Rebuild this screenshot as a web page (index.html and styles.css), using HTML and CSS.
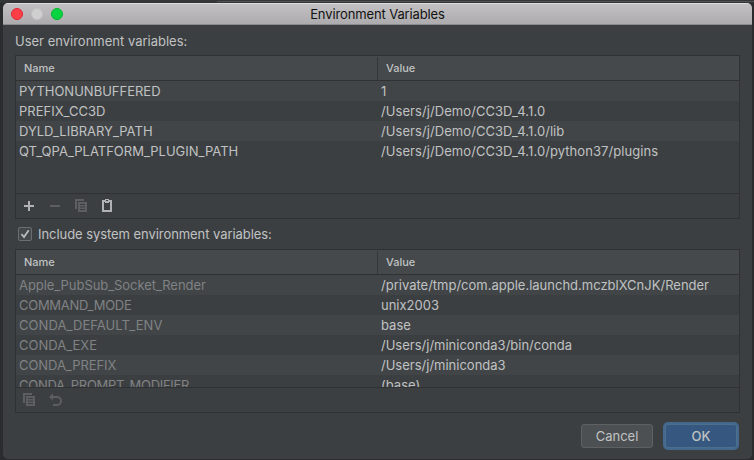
FILE: index.html
```html
<!DOCTYPE html>
<html lang="en">
<head>
<meta charset="utf-8">
<title>Environment Variables</title>
<link rel="stylesheet" href="styles.css">
</head>
<body>
<main class="window">
  <header class="titlebar">
    <div class="lights"><i class="light close"></i><i class="light minimize"></i><i class="light maximize"></i></div>
    <h1 class="title">Environment Variables</h1>
  </header>
  <section class="content">
    <div class="label user-label"><span>User environment variables:</span></div>
    <div class="panel user-panel">
      <div class="row head"><span class="name">Name</span><span class="value">Value</span></div>
      <div class="rows">
        <div class="row"><span class="name">PYTHONUNBUFFERED</span><span class="value">1</span></div>
        <div class="row"><span class="name">PREFIX_CC3D</span><span class="value loose">/Users/j/Demo/CC3D_4.1.0</span></div>
        <div class="row"><span class="name">DYLD_LIBRARY_PATH</span><span class="value loose">/Users/j/Demo/CC3D_4.1.0/lib</span></div>
        <div class="row"><span class="name">QT_QPA_PLATFORM_PLUGIN_PATH</span><span class="value loose">/Users/j/Demo/CC3D_4.1.0/python37/plugins</span></div>
      </div>
      <div class="tools">
        <svg class="icon on" viewBox="0 0 16 16"><path d="M7 3h2v4h4v2H9v4H7V9H3V7h4z"/></svg>
        <svg class="icon" viewBox="0 0 16 16"><path d="M3 7h10v2H3z"/></svg>
        <svg class="icon" viewBox="0 0 16 16"><path d="M2 1h9v2H4v8H2z"/><path fill-rule="evenodd" d="M5 4h9v10H5zM7 6v1h5V6zM7 8.500v1h5v-1zM7 11v1h5v-1z"/></svg>
        <svg class="icon on" viewBox="0 0 16 16"><path fill-rule="evenodd" d="M3 2h3V1h4v1h3v12H3zM5 4v8h6V4H10v1H6V4zM7 2v1h2V2z"/></svg>
      </div>
    </div>
    <label class="label check-label"><svg class="checkbox" viewBox="0 0 14 14"><rect class="box" x=".5" y=".5" width="13" height="13" rx="1.500"/><path class="tick" d="M3.500 7.200 6 10l4.700-6.700"/></svg><span class="snug">Include system environment variables:</span></label>
    <div class="panel system-panel">
      <div class="row head"><span class="name">Name</span><span class="value">Value</span></div>
      <div class="rows">
        <div class="row"><span class="name snug">Apple_PubSub_Socket_Render</span><span class="value">/private/tmp/com.apple.launchd.mczblXCnJK/Render</span></div>
        <div class="row"><span class="name tight">COMMAND_MODE</span><span class="value">unix2003</span></div>
        <div class="row"><span class="name loose">CONDA_DEFAULT_ENV</span><span class="value">base</span></div>
        <div class="row"><span class="name">CONDA_EXE</span><span class="value">/Users/j/miniconda3/bin/conda</span></div>
        <div class="row"><span class="name snug">CONDA_PREFIX</span><span class="value">/Users/j/miniconda3</span></div>
        <div class="row"><span class="name tight">CONDA_PROMPT_MODIFIER</span><span class="value">(base)</span></div>
      </div>
      <div class="tools">
        <svg class="icon" viewBox="0 0 16 16"><path d="M2 1h9v2H4v8H2z"/><path fill-rule="evenodd" d="M5 4h9v10H5zM7 6v1h5V6zM7 8.500v1h5v-1zM7 11v1h5v-1z"/></svg>
        <svg class="icon" viewBox="0 0 16 16"><path d="M2 4.900 6 1.300v7.200z"/><path class="curve" d="M5 5h5a4 4 0 0 1 0 8H6"/></svg>
      </div>
    </div>
    <footer class="buttons"><button class="button">Cancel</button><button class="button primary">OK</button></footer>
  </section>
</main>
</body>
</html>
```

FILE: styles.css
```css
* { box-sizing: border-box; }
body {
  margin: 0;
  width: 754px;
  height: 460px;
  padding: 3px 2px 1px 3px;
  overflow: hidden;
  background:
    linear-gradient(#505253, #505253) 217px 1px / 537px 1px no-repeat,
    linear-gradient(#343738, #343738) 0 0 / 754px 3px no-repeat,
    #2a2c2d;
  font: 13px/20px Inter, "Liberation Sans", sans-serif;
  color: #c0c2c3;
}
.window {
  width: 749px;
  height: 456px;
  border-radius: 5px;
  background: #3c3f41;
  overflow: hidden;
}
.titlebar {
  display: grid;
  grid-template-columns: 100px 1fr 100px;
  align-items: center;
  height: 22px;
  background: linear-gradient(#c2c0c2, #adabad);
  border-top: 1px solid #dcdcdc;
  border-bottom: 1px solid #8b8b8b;
}
.lights { display: flex; gap: 8px; padding-left: 8px; }
.light { width: 12px; height: 12px; border-radius: 50%; border: 1px solid; }
.close { background: #fc3e46; border-color: #df2733; }
.minimize { background: #d0cfd0; border-color: #c3c2c3; }
.maximize { background: #08d442; border-color: #04b52d; }
.title { margin: 0; text-align: center; font-size: 13px; font-weight: 400; letter-spacing: -.12px; color: #111; }
.content { padding: 0 12px; }
.label { display: flex; align-items: center; height: 30px; }
.user-label { padding-top: 2px; }
.panel { display: flex; flex-direction: column; width: 725px; height: 164px; border: 1px solid #2f3133; }
.row { display: grid; grid-template-columns: 361px 1fr; height: 20px; flex: none; white-space: pre; }
.row span { padding-left: 3px; }
.row .value { padding-left: 4px; }
.loose { letter-spacing: .07px; }
.snug { letter-spacing: -.06px; }
.tight { letter-spacing: -.28px; }
.rows { flex: 1; min-height: 0; overflow: hidden; }
.rows .row:nth-child(odd) { background: #414547; }
.row.head {
  height: 25px;
  padding: 1px 0;
  border-bottom: 1px solid #2f3133;
  background: #45494b;
  font-size: 11px;
  font-weight: 500;
  line-height: 23px;
}
.row.head .name { padding-left: 8px; }
.row.head .value { padding-left: 8px; border-left: 1px solid #34373a; }
.system-panel .rows .name { color: #808284; }
.tools { display: flex; align-items: center; gap: 10px; height: 25px; flex: none; border-top: 1px solid #2f3133; padding-left: 5px; }
.icon { width: 16px; height: 16px; fill: #5c5e60; }
.icon.on { fill: #b0b2b4; }
.curve { fill: none; stroke: #5c5e60; stroke-width: 2; }
.check-label { gap: 6px; padding-left: 3px; }
.checkbox { width: 14px; height: 14px; }
.box { fill: #43494a; stroke: #6b6e70; }
.tick { fill: none; stroke: #b9bbbc; stroke-width: 1.800; }
.buttons { display: flex; justify-content: flex-end; align-items: center; gap: 10px; height: 28px; margin-top: 9px; padding-right: 1px; }
.button { width: 72px; height: 24px; padding: 0; border: 1px solid #5e6163; border-radius: 3px; background: #4c5052; color: #c0c2c3; font: inherit; line-height: 22px; }
.primary { width: 76px; height: 28px; border: 2px solid #43698e; border-radius: 5px; background: #365880; box-shadow: inset 0 0 0 1px #4c708c; font-weight: 500; }
```
